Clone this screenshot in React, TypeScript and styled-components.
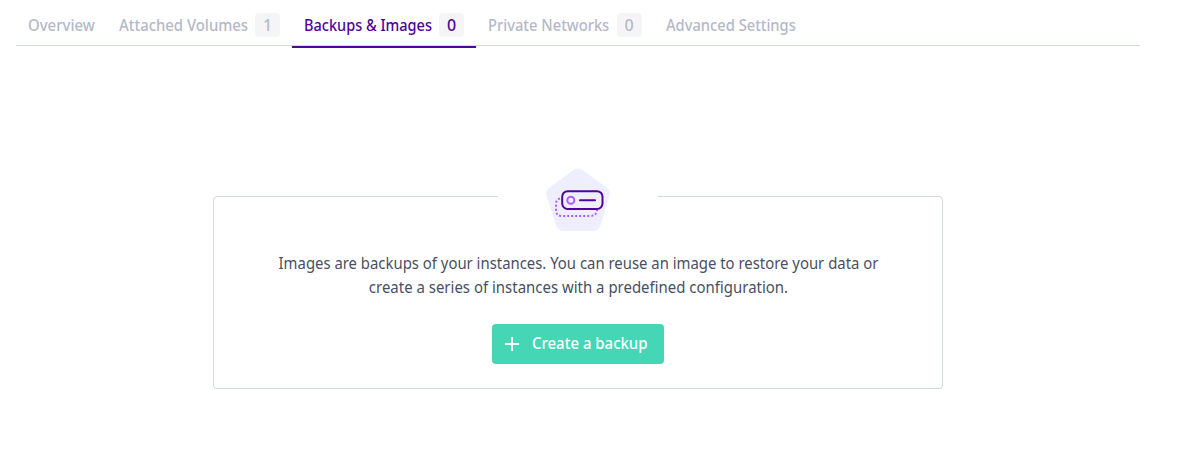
import React from "react";
import styled, { createGlobalStyle } from "styled-components";

const GlobalStyle = createGlobalStyle`
  * { box-sizing: border-box; }
  body {
    margin: 0;
    background: #fff;
    color: #4a4f62;
    font-family: "Noto Sans", "Open Sans", sans-serif;
    font-size: 16px;
    line-height: 24px;
  }
`;

const Page = styled.main`
  width: 1156px;
  min-height: 452px;
  padding: 5px 16px 0;
`;

const Tabs = styled.nav`
  display: flex;
  height: 41px;
  border-bottom: 1px solid #d4d7e6;
`;

const Tab = styled.a<{ $width: number; $active?: boolean }>`
  display: flex;
  align-items: center;
  justify-content: space-between;
  width: ${(p) => p.$width}px;
  height: ${(p) => (p.$active ? 43 : 41)}px;
  padding: 0 12px 1px;
  border-bottom: ${(p) => (p.$active ? "2px solid #4f0599" : "0")};
  color: ${(p) => (p.$active ? "#4f0599" : "#b5b8c9")};
  font-weight: 500;
  white-space: nowrap;
`;

const TabLabel = styled.span<{ $scale: number }>`
  min-width: 0;
  flex: 0 1 0;
  transform: scaleX(${(p) => p.$scale});
  transform-origin: left center;
`;

const Badge = styled.span`
  flex: none;
  width: 25px;
  height: 24px;
  border-radius: 4px;
  background: #f5f5f8;
  text-align: center;
`;

const EmptyState = styled.section`
  display: flex;
  flex-direction: column;
  align-items: center;
  width: 730px;
  height: 193px;
  margin: 150px auto 0;
  border: 1px solid #d4d7e6;
  border-radius: 4px;
`;

const IconHolder = styled.div`
  display: flex;
  justify-content: center;
  width: 160px;
  height: 64px;
  margin-top: -29px;
  background: #fff;
`;

const Description = styled.p`
  margin: 19px 0 25px;
  text-align: center;
  white-space: nowrap;
`;

const Line = styled.span<{ $scale: number }>`
  display: block;
  transform: scaleX(${(p) => p.$scale});
`;

const CreateButton = styled.button`
  display: flex;
  align-items: center;
  gap: 13px;
  width: 172px;
  height: 40px;
  padding: 0 0 0 13px;
  border: 0;
  border-radius: 4px;
  background: #45d6b5;
  color: #fff;
  font: inherit;
  font-weight: 500;
  white-space: nowrap;
`;

const ButtonLabel = styled.span`
  padding-bottom: 2px;
  transform: scaleX(0.935);
  transform-origin: left center;
`;

const PlusIcon = () => (
  <svg width="14" height="14" viewBox="0 0 14 14">
    <path d="M7 0v14M0 7h14" stroke="#fff" strokeWidth="2" />
  </svg>
);

const InstanceIcon = () => (
  <svg width="64" height="64" viewBox="0 0 64 64" fill="none">
    <path
      d="M27.5 2Q32-1 36.500 2L61 20Q65.500 23.500 63.500 28L54.500 57Q52.500 63 47 63H17.500Q12 63 10 57L.7 28Q-1 23.500 3 20Z"
      fill="#eeeeff"
    />
    <path
      d="M14 30.500Q10 31.500 10 36V42Q10 48 16 48H44Q50.500 48 51 42"
      stroke="#b15cff"
      strokeWidth="2"
      strokeDasharray="2 2"
    />
    <rect x="16.200" y="23.200" width="40.300" height="17.800" rx="5.500" fill="#eeeeff" stroke="#4f0599" strokeWidth="2" />
    <circle cx="24.800" cy="32.200" r="3.500" stroke="#b15cff" strokeWidth="2" />
    <path d="M34 32.200H49" stroke="#4f0599" strokeWidth="2" strokeLinecap="round" />
  </svg>
);

const tabs = [
  { label: "Overview", width: 90.5, scale: 0.935 },
  { label: "Attached Volumes", width: 185.5, scale: 0.93, count: 1 },
  { label: "Backups & Images", width: 184, scale: 0.907, count: 0, active: true },
  { label: "Private Networks", width: 177.5, scale: 0.92, count: 0 },
  { label: "Advanced Settings", width: 154, scale: 0.918 },
];

export default function App() {
  return (
    <Page>
      <GlobalStyle />
      <Tabs>
        {tabs.map((tab) => (
          <Tab key={tab.label} $width={tab.width} $active={tab.active}>
            <TabLabel $scale={tab.scale}>{tab.label}</TabLabel>
            {tab.count !== undefined && <Badge>{tab.count}</Badge>}
          </Tab>
        ))}
      </Tabs>
      <EmptyState>
        <IconHolder>
          <InstanceIcon />
        </IconHolder>
        <Description>
          <Line $scale={0.93}>Images are backups of your instances. You can reuse an image to restore your data or</Line>
          <Line $scale={0.935}>create a series of instances with a predefined configuration.</Line>
        </Description>
        <CreateButton type="button">
          <PlusIcon />
          <ButtonLabel>Create a backup</ButtonLabel>
        </CreateButton>
      </EmptyState>
    </Page>
  );
}
